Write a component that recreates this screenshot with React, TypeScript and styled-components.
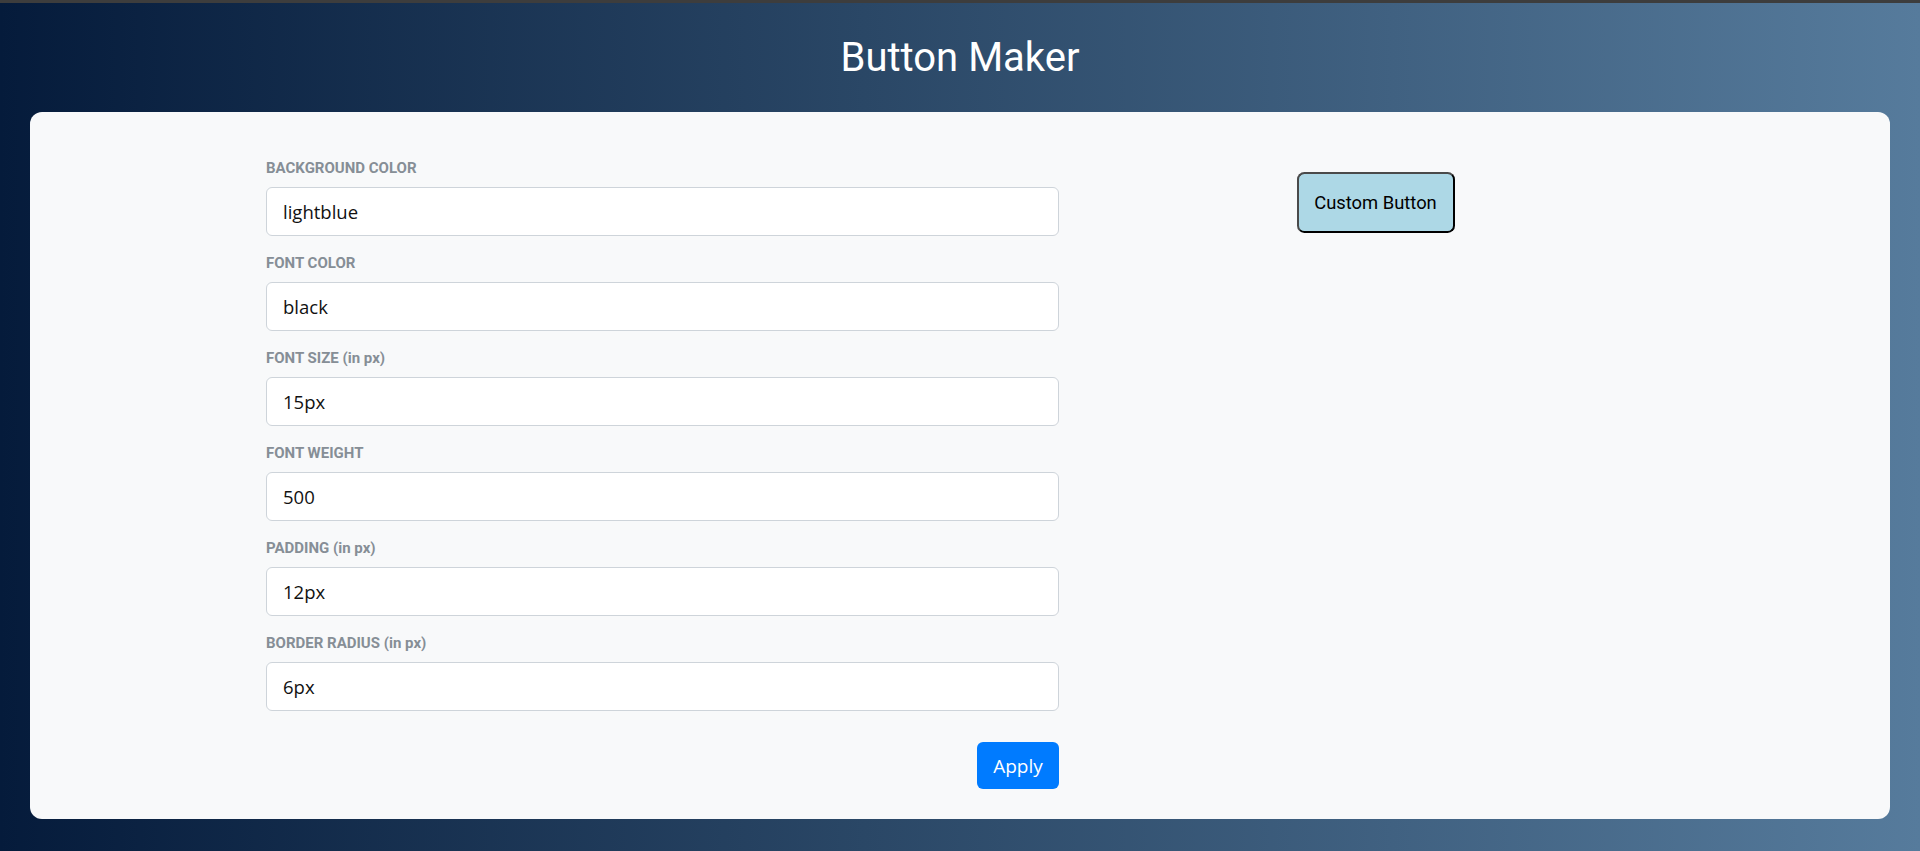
import { useState } from 'react'
import styled, { createGlobalStyle } from 'styled-components'

const GlobalStyle = createGlobalStyle`
  html, body {
    margin: 0;
    padding: 0;
  }
  body {
    font-family: Roboto, "Liberation Sans", sans-serif;
    background: #3d3d3d;
  }
  * {
    box-sizing: border-box;
  }
`

const Page = styled.div`
  min-height: 848px;
  margin-top: 3px;
  display: flex;
  flex-direction: column;
  background: linear-gradient(90deg, #051b3b 0%, #2a4766 45%, #567b9c 100%);
  padding: 0 30px 32px;
`

const Title = styled.h1`
  margin: 0;
  padding: 31px 0 31px;
  text-align: center;
  color: #ffffff;
  font-family: Roboto, "Liberation Sans", sans-serif;
  font-size: 40px;
  font-weight: 400;
  line-height: 47px;
`

const Card = styled.main`
  flex: 1;
  display: flex;
  align-items: flex-start;
  background: #f8f9fa;
  border-radius: 12px;
  padding: 47px 0 30px 236px;
`

const Form = styled.form`
  width: 793px;
  display: flex;
  flex-direction: column;
  gap: 18px;
`

const Field = styled.div`
  display: flex;
  flex-direction: column;
`

const Label = styled.label`
  font-family: Roboto, "Liberation Sans", sans-serif;
  font-size: 15px;
  font-weight: 700;
  line-height: 18px;
  color: #868e96;
  margin-bottom: 10px;
`

const Input = styled.input`
  height: 49px;
  width: 100%;
  border: 1px solid #ced4da;
  border-radius: 6px;
  background: #ffffff;
  padding: 0 16px;
  font-family: "Open Sans", "Noto Sans", sans-serif;
  font-size: 18.5px;
  color: #111111;
  outline: none;
`

const Actions = styled.div`
  display: flex;
  justify-content: flex-end;
  margin-top: 13px;
`

const ApplyButton = styled.button`
  width: 82px;
  height: 47px;
  border: none;
  border-radius: 6px;
  background: #007bff;
  color: #ffffff;
  font-family: "Open Sans", "Noto Sans", sans-serif;
  font-size: 19px;
  cursor: pointer;
`

const Preview = styled.section`
  width: 633px;
  display: flex;
  justify-content: center;
  padding-top: 13px;
`

const CustomButton = styled.button<{ $bg: string; $color: string; $size: string; $pad: string; $radius: string }>`
  width: 158px;
  height: 61px;
  background: ${({ $bg }) => $bg};
  color: ${({ $color }) => $color};
  font-family: Roboto, "Liberation Sans", sans-serif;
  font-size: ${({ $size }) => `calc(${$size} * 1.225)`};
  font-weight: 400;
  padding: ${({ $pad }) => `calc(${$pad} * 1.225)`};
  border-radius: ${({ $radius }) => `calc(${$radius} * 1.225)`};
  border: 2px solid #000000;
  border-top-color: #4a4a4a;
  border-left-color: #4a4a4a;
  white-space: nowrap;
`

type Settings = {
  bg: string
  color: string
  size: string
  weight: string
  pad: string
  radius: string
}

const fields: { key: keyof Settings; label: string }[] = [
  { key: 'bg', label: 'BACKGROUND COLOR' },
  { key: 'color', label: 'FONT COLOR' },
  { key: 'size', label: 'FONT SIZE (in px)' },
  { key: 'weight', label: 'FONT WEIGHT' },
  { key: 'pad', label: 'PADDING (in px)' },
  { key: 'radius', label: 'BORDER RADIUS (in px)' },
]

const initial: Settings = {
  bg: 'lightblue',
  color: 'black',
  size: '15px',
  weight: '500',
  pad: '12px',
  radius: '6px',
}

const App = () => {
  const [draft, setDraft] = useState<Settings>(initial)
  const [applied, setApplied] = useState<Settings>(initial)

  return (
    <>
      <GlobalStyle />
      <Page>
        <Title>Button Maker</Title>
        <Card>
          <Form
            onSubmit={(e) => {
              e.preventDefault()
              setApplied(draft)
            }}
          >
            {fields.map((f) => (
              <Field key={f.key}>
                <Label htmlFor={f.key}>{f.label}</Label>
                <Input
                  id={f.key}
                  value={draft[f.key]}
                  onChange={(e) => setDraft({ ...draft, [f.key]: e.target.value })}
                />
              </Field>
            ))}
            <Actions>
              <ApplyButton type="submit">Apply</ApplyButton>
            </Actions>
          </Form>
          <Preview>
            <CustomButton
              $bg={applied.bg}
              $color={applied.color}
              $size={applied.size}
              $pad={applied.pad}
              $radius={applied.radius}
            >
              Custom Button
            </CustomButton>
          </Preview>
        </Card>
      </Page>
    </>
  )
}

export default App
